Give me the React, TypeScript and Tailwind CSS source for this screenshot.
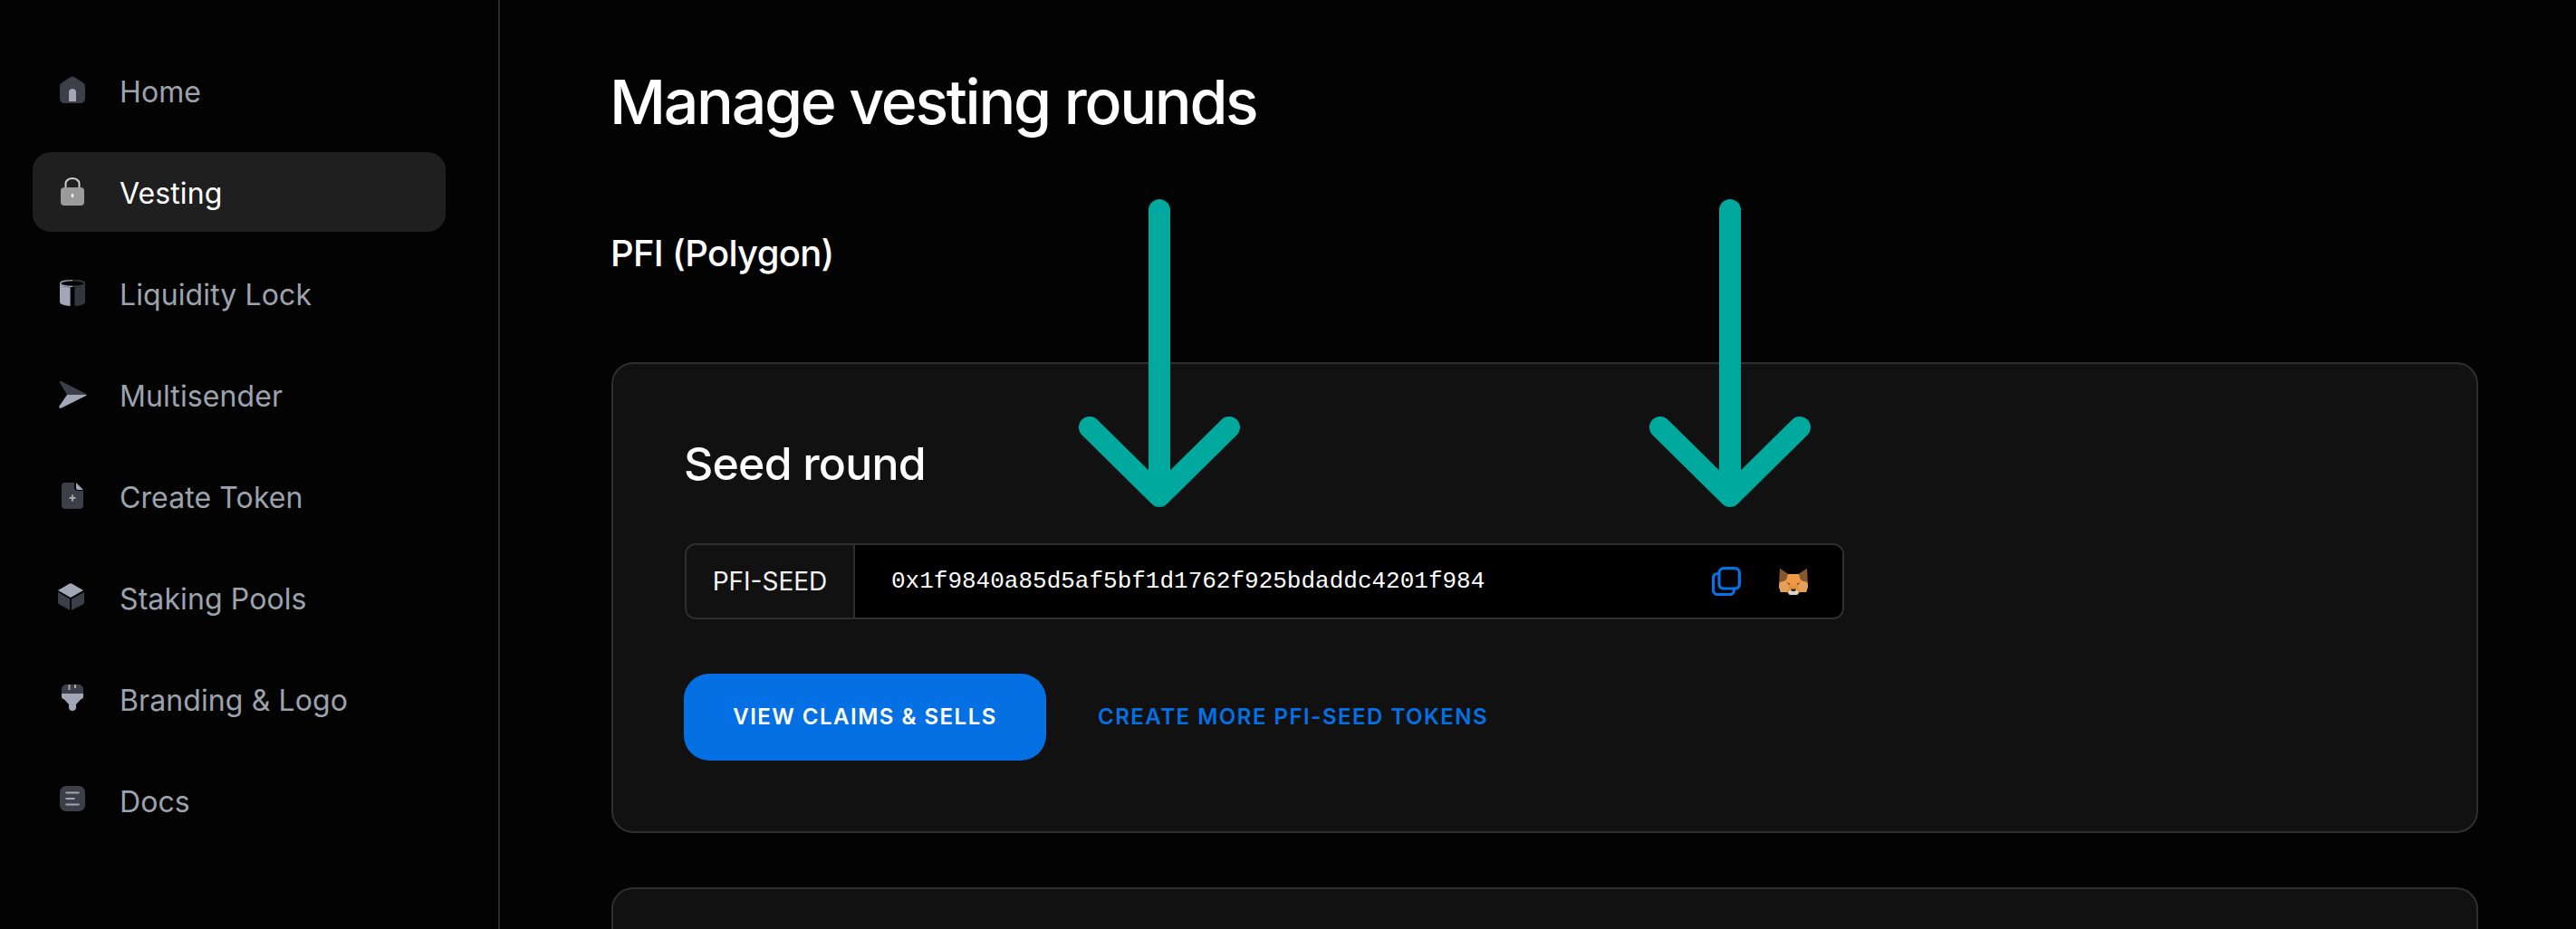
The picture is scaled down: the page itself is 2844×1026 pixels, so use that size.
const DARK = "#3c3f48";
const LIGHT = "#a1a7b5";

function IconBox({ children }: { children: React.ReactNode }) {
  return (
    <svg width="40" height="40" viewBox="0 0 40 40" className="shrink-0" fill="none">
      {children}
    </svg>
  );
}

function HomeIcon() {
  return (
    <IconBox>
      <path d="M6 15.500c0-1.600.7-3 1.900-4.100l9.300-5.900c1.700-1.300 4-1.300 5.600 0l9.300 5.900c1.200 1.100 1.900 2.500 1.900 4.100V29c0 2.800-2.200 5-5 5H11c-2.800 0-5-2.200-5-5z" fill={DARK} />
      <path d="M16 22a4 4 0 0 1 8 0v10h-8z" fill={LIGHT} />
    </IconBox>
  );
}

function LockIcon() {
  return (
    <IconBox>
      <path d="M12.500 16v-5.500a7.500 5.500 0 0 1 15 0V16" stroke="#d0d0d0" strokeWidth="2" />
      <rect x="7" y="15" width="26" height="20" rx="4" fill="#9b9b9b" />
      <rect x="19" y="22" width="2" height="4" fill="#f2f2f2" />
    </IconBox>
  );
}

function CylinderIcon() {
  return (
    <IconBox>
      <path d="M6 9c0 2.400 5 4 11.600 4.300V34C11 33.700 6 32 6 29.500z" fill={LIGHT} />
      <path d="M22.400 13.300C29 13 34 11.400 34 9v20.500c0 2.500-5 4.200-11.600 4.500z" fill="#34363d" />
      <path d="M20 5.600C12.500 5.600 6.700 7 6.700 9s5.800 3.400 13.300 3.400" stroke={LIGHT} strokeWidth="1.400" fill="#050505" />
      <path d="M20 5.600c7.500 0 13.300 1.400 13.300 3.400s-5.800 3.400-13.300 3.400" stroke={DARK} strokeWidth="1.400" fill="#050505" />
    </IconBox>
  );
}

function SendIcon() {
  return (
    <IconBox>
      <path d="M6 6.600c-.6-1.300.5-2.200 1.800-1.600L35 19c.4.200.6.500.6 1H14z" fill={DARK} />
      <path d="M35.600 20c0 .5-.2.800-.6 1L8 34.600c-1.800.8-3.300-.5-2.600-2.200L14 20z" fill={LIGHT} />
    </IconBox>
  );
}

function TokenIcon() {
  return (
    <IconBox>
      <path d="M8 9a4 4 0 0 1 4-4h10v5a4 4 0 0 0 4 4h6v16a4 4 0 0 1-4 4H12a4 4 0 0 1-4-4z" fill={DARK} />
      <path d="M24 5l8 8h-6a2 2 0 0 1-2-2z" fill={LIGHT} />
      <path d="M20 18.500v7M16.500 22h7" stroke={LIGHT} strokeWidth="2" />
    </IconBox>
  );
}

function CubeIcon() {
  return (
    <IconBox>
      <path d="M16.800 4.500a3 3 0 0 1 2.400 0l12.800 7.500-14 8-14-8z" fill={LIGHT} />
      <path d="M4 14l13.200 7.600V34L5.500 27.500A3 3 0 0 1 4 25z" fill={DARK} />
      <path d="M33 14v11a3 3 0 0 1-1.500 2.500L19 34V21.600z" fill={DARK} />
    </IconBox>
  );
}

function BrushIcon() {
  return (
    <IconBox>
      <path d="M8 9a5 5 0 0 1 5-5h14a5 5 0 0 1 5 5v5H8z" fill={DARK} />
      <path d="M16.500 4v6M23 4v4" stroke={LIGHT} strokeWidth="2" />
      <path d="M8 14h24v3c0 2-1 3-3 3.500L24 26v3a4 4 0 0 1-8 0v-3l-5-5.500c-2-.5-3-1.500-3-3.500z" fill={LIGHT} />
    </IconBox>
  );
}

function DocsIcon() {
  return (
    <IconBox>
      <rect x="6" y="4" width="28" height="28" rx="7" fill={DARK} />
      <path d="M12.500 11.500h15M12.500 18h10M12.500 24.500h15" stroke={LIGHT} strokeWidth="2" />
    </IconBox>
  );
}

const navItems = [
  { label: "Home", icon: <HomeIcon /> },
  { label: "Vesting", icon: <LockIcon />, active: true },
  { label: "Liquidity Lock", icon: <CylinderIcon /> },
  { label: "Multisender", icon: <SendIcon /> },
  { label: "Create Token", icon: <TokenIcon /> },
  { label: "Staking Pools", icon: <CubeIcon /> },
  { label: "Branding & Logo", icon: <BrushIcon /> },
  { label: "Docs", icon: <DocsIcon /> },
];

function CopyIcon() {
  return (
    <svg width="32" height="32" viewBox="0 0 32 32" fill="none" stroke="#0672e6" strokeWidth="3.200">
      <rect x="8" y="1.600" width="22.400" height="22.400" rx="5" />
      <path d="M8 7.500H6.500a5 5 0 0 0-5 5v13.200a5 5 0 0 0 5 5h13a5 5 0 0 0 5-5V24" />
    </svg>
  );
}

function FoxIcon() {
  return (
    <svg width="32" height="30" viewBox="0 0 32 30">
      <path d="M1 1l9 6h12l9-6 .5 14 .5 6-2 6-7 0-3 3h-8l-3-3-7 0-2-6 .5-6z" fill="#e8913a" />
      <path d="M1 1l9 6-1.500 6L5 15l-4 1z" fill="#85572f" />
      <path d="M31 1l-9 6 1.500 6L27 15l4 1z" fill="#85572f" />
      <path d="M10 7h12l1.500 6-3.500 6h-8l-3.500-6z" fill="#f09a48" />
      <path d="M1 16l7-1 3 6-3 6H2l-2-6z" fill="#e2a25c" />
      <path d="M31 16l-7-1-3 6 3 6h6l2-6z" fill="#e2a25c" />
      <path d="M8.500 16.500l4 1-1 1.500z" fill="#6a4a2e" />
      <path d="M23.500 16.500l-4 1 1 1.500z" fill="#6a4a2e" />
      <path d="M10 27l3-3h6l3 3-2 3h-8z" fill="#dcd2c6" />
      <path d="M13 23.500h6l-1 2.500h-4z" fill="#2d2a28" />
    </svg>
  );
}

function Arrow({ className }: { className: string }) {
  return (
    <svg
      width="180"
      height="340"
      viewBox="0 0 180 340"
      fill="none"
      stroke="#00a99d"
      strokeWidth="24"
      strokeLinecap="round"
      strokeLinejoin="round"
      className={className}
    >
      <path d="M90 12V328M13 252l77 76 77-76" />
    </svg>
  );
}

export default function App() {
  return (
    <div className="relative flex h-[1026px] w-full overflow-hidden bg-[#030303] font-['Inter',sans-serif] text-white">
      <aside className="flex w-[552px] shrink-0 flex-col gap-6 border-r-2 border-[#2a2a2a] pl-9 pr-[58px] pt-14">
        {navItems.map((item) => (
          <div
            key={item.label}
            className={`flex h-[88px] items-center gap-[32px] rounded-[20px] pl-6 text-[32px] tracking-[0.1px] ${
              item.active ? "bg-[#1f1f1f] text-white" : "text-[#9ca3af]"
            }`}
          >
            {item.icon}
            <span className="pt-1">{item.label}</span>
          </div>
        ))}
      </aside>

      <main className="min-w-0 flex-1 pl-[123px] pr-[108px]">
        <h1 className="-ml-0.5 mt-[62px] text-[68px] font-medium leading-[100px] tracking-[-2.3px]">Manage vesting rounds</h1>
        <h2 className="-ml-px mt-[90px] text-[40px] font-medium leading-[56px] tracking-[-0.7px]">PFI (Polygon)</h2>
        <section className="mt-[92px] h-[520px] rounded-[24px] border-2 border-[#2f2f2f] bg-[#111111] px-[78px] pt-[74px]">
          <h3 className="text-[50px] font-medium leading-[72px] tracking-[-0.8px]">Seed round</h3>
          <div className="ml-px mt-[52px] flex h-[84px] w-[1280px] overflow-hidden rounded-[12px] border-2 border-[#2f2f2f]">
            <div className="flex w-[186px] shrink-0 items-center justify-center border-r-2 border-[#2f2f2f] text-[28px] text-[#f5f5f5]">
              PFI-SEED
            </div>
            <div className="flex flex-1 items-center bg-black pl-10 pr-[38px]">
              <span className="flex-1 font-['Liberation_Mono',monospace] text-[26px] text-white">
                0x1f9840a85d5af5bf1d1762f925bdaddc4201f984
              </span>
              <CopyIcon />
              <span className="ml-[42px] flex">
                <FoxIcon />
              </span>
            </div>
          </div>
          <div className="mt-[60px] flex items-center gap-[57px]">
            <button className="flex h-24 w-[400px] items-center justify-center rounded-[28px] bg-[#0570e4] text-[24px] font-semibold tracking-[1.5px] text-white">
              VIEW CLAIMS &amp; SELLS
            </button>
            <a className="text-[24px] font-semibold tracking-[1.5px] text-[#0570e4]">CREATE MORE PFI-SEED TOKENS</a>
          </div>
        </section>
        <section className="mt-[60px] h-[200px] rounded-[24px] border-2 border-[#2f2f2f] bg-[#111111]" />
      </main>

      <Arrow className="absolute left-[1190px] top-[220px]" />
      <Arrow className="absolute left-[1820px] top-[220px]" />
    </div>
  );
}
